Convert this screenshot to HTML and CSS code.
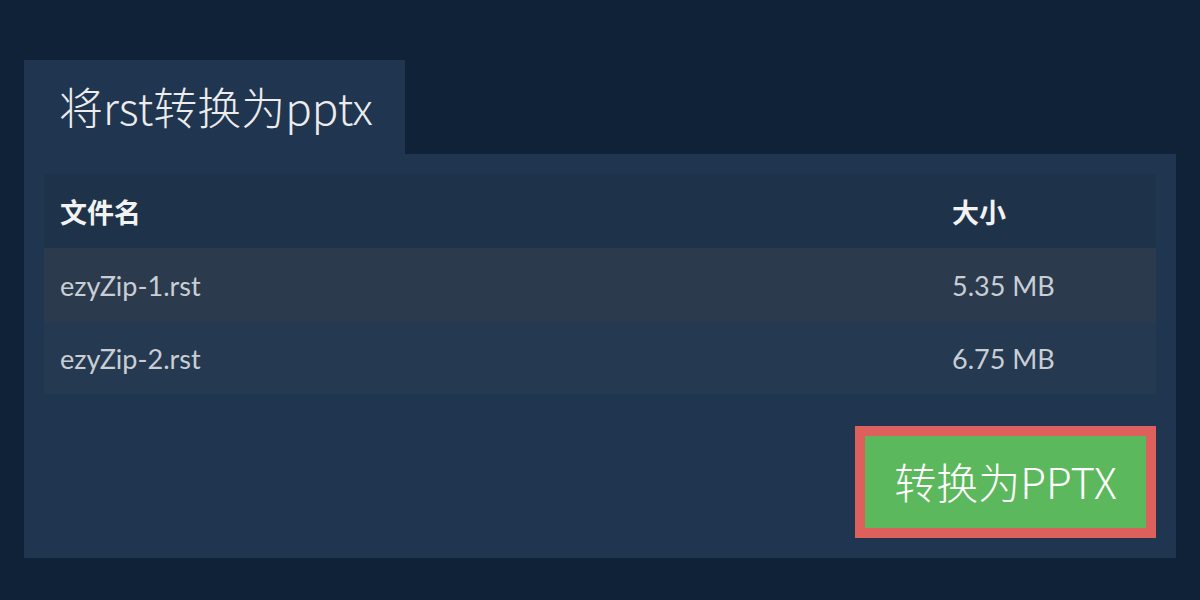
FILE: index.html
```html
<!DOCTYPE html>
<html lang="zh">
<head>
<meta charset="utf-8">
<title>将rst转换为pptx</title>
<link rel="stylesheet" href="styles.css">
</head>
<body>
<div class="wrap">
  <div class="tab"><h1 class="title">将rst转换为pptx</h1></div>
  <div class="panel">
    <div class="table">
      <div class="row head"><div class="cell">文件名</div><div class="cell">大小</div></div>
      <div class="row odd"><div class="cell">ezyZip-1.rst</div><div class="cell">5.35 MB</div></div>
      <div class="row even"><div class="cell">ezyZip-2.rst</div><div class="cell">6.75 MB</div></div>
    </div>
    <div class="actions">
      <button class="convert">转换为PPTX</button>
    </div>
  </div>
</div>
</body>
</html>
```

FILE: styles.css
```css
html, body {
  margin: 0;
  padding: 0;
  background: #0f2237;
  font-family: Lato, "Noto Sans CJK SC", sans-serif;
}
.wrap {
  padding: 60px 24px 0;
}
.tab {
  display: inline-flex;
  align-items: center;
  height: 94px;
  width: 381px;
  box-sizing: border-box;
  padding-left: 35px;
  background: #203550;
}
.title {
  margin: 0;
  font-family: "Noto Sans CJK SC", sans-serif;
  font-size: 44px;
  font-weight: 300;
  color: #ececec;
  line-height: 1;
  padding-bottom: 2px;
}
.panel {
  background: #203550;
  padding: 20px;
}
.table {
  display: flex;
  flex-direction: column;
}
.row {
  display: grid;
  grid-template-columns: 1fr 220px;
  align-items: center;
}
.cell {
  padding: 0 16px;
}
.head {
  height: 74px;
  background: #1e3249;
  color: #f2f2f2;
  font-weight: 700;
  font-size: 27px;
}
.odd, .even {
  font-size: 27px;
  color: #c9ced5;
}
.odd {
  height: 74px;
  background: #2b3b4d;
}
.even {
  height: 72px;
  background: #253951;
}
.actions {
  display: flex;
  justify-content: flex-end;
  margin-top: 32px;
}
.convert {
  width: 301px;
  height: 112px;
  box-sizing: border-box;
  border: 10px solid #dd605c;
  background: #5cb85c;
  color: #ffffff;
  font-family: "Noto Sans CJK SC", sans-serif;
  font-weight: 300;
  font-size: 42px;
  line-height: 1;
  padding: 0 0 2px;
  cursor: pointer;
}
```
